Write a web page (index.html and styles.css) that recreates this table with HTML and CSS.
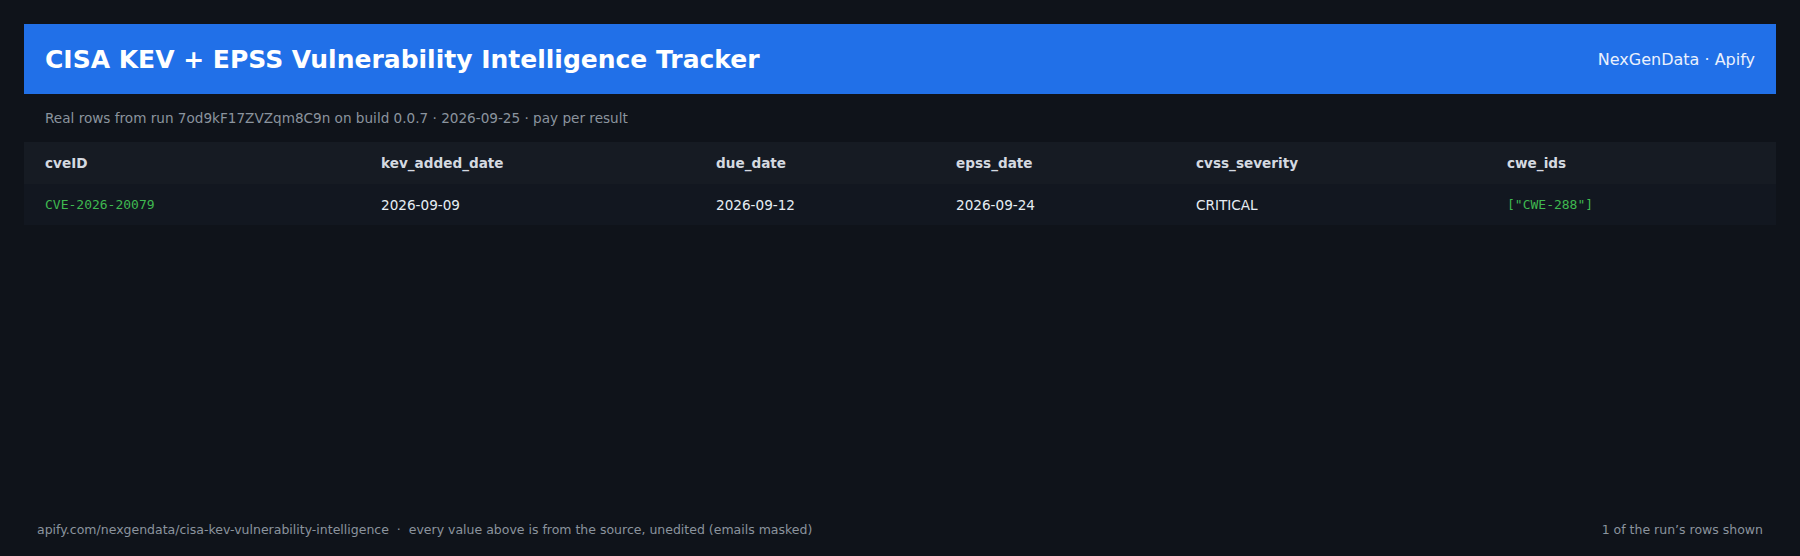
FILE: index.html
```html
<!DOCTYPE html>
<html>
<head>
<meta charset="utf-8">
<link rel="stylesheet" href="styles.css">
</head>
<body>
<div class="page">
  <header class="banner">
    <h1 class="title">CISA KEV + EPSS Vulnerability Intelligence Tracker</h1>
    <div class="brand">NexGenData · Apify</div>
  </header>
  <p class="sub">Real rows from run 7od9kF17ZVZqm8C9n on build 0.0.7 · 2026-09-25 · pay per result</p>
  <table class="grid">
    <thead>
      <tr>
        <th class="c1">cveID</th>
        <th class="c2">kev_added_date</th>
        <th class="c3">due_date</th>
        <th class="c4">epss_date</th>
        <th class="c5">cvss_severity</th>
        <th class="c6">cwe_ids</th>
      </tr>
    </thead>
    <tbody>
      <tr>
        <td class="mono">CVE-2026-20079</td>
        <td>2026-09-09</td>
        <td>2026-09-12</td>
        <td>2026-09-24</td>
        <td>CRITICAL</td>
        <td class="mono">["CWE-288"]</td>
      </tr>
    </tbody>
  </table>
  <footer class="foot">
    <span>apify.com/nexgendata/cisa-kev-vulnerability-intelligence &nbsp;·&nbsp; every value above is from the source, unedited (emails masked)</span>
    <span>1 of the run’s rows shown</span>
  </footer>
</div>
</body>
</html>
```
FILE: styles.css
```css
html, body {
  margin: 0;
  padding: 0;
  background: #0f131a;
  font-family: "DejaVu Sans", sans-serif;
}
.page {
  box-sizing: border-box;
  height: 556px;
  padding: 24px 24px 0 24px;
  display: flex;
  flex-direction: column;
}
.banner {
  background: #2170e8;
  height: 70px;
  display: flex;
  align-items: center;
  justify-content: space-between;
  padding: 0 21px;
}
.title {
  margin: 0;
  color: #ffffff;
  font-size: 25px;
  font-weight: bold;
}
.brand {
  color: #eaf1fd;
  font-size: 16px;
}
.sub {
  margin: 0;
  padding: 16px 21px 0 21px;
  height: 32px;
  color: #8b949e;
  font-size: 13.6px;
}
.grid {
  width: 100%;
  border-collapse: collapse;
  table-layout: fixed;
}
.grid .c1 { width: 336px; }
.grid .c2 { width: 335px; }
.grid .c3 { width: 240px; }
.grid .c4 { width: 240px; }
.grid .c5 { width: 311px; }
.grid th {
  box-sizing: border-box;
  background: #161b23;
  color: #d4d9e0;
  font-size: 13.6px;
  font-weight: bold;
  text-align: left;
  height: 42px;
  padding: 0 21px;
}
.grid td {
  background: #121720;
  color: #e6edf3;
  font-size: 13.6px;
  height: 41px;
  padding: 0 21px;
}
.grid td.mono {
  font-family: "DejaVu Sans Mono", monospace;
  font-size: 13px;
  color: #3fb950;
}
.foot {
  margin-top: auto;
  margin-left: 13px;
  margin-right: 13px;
  height: 54px;
  display: flex;
  align-items: center;
  justify-content: space-between;
  color: #8b949e;
  font-size: 12.5px;
}
```
